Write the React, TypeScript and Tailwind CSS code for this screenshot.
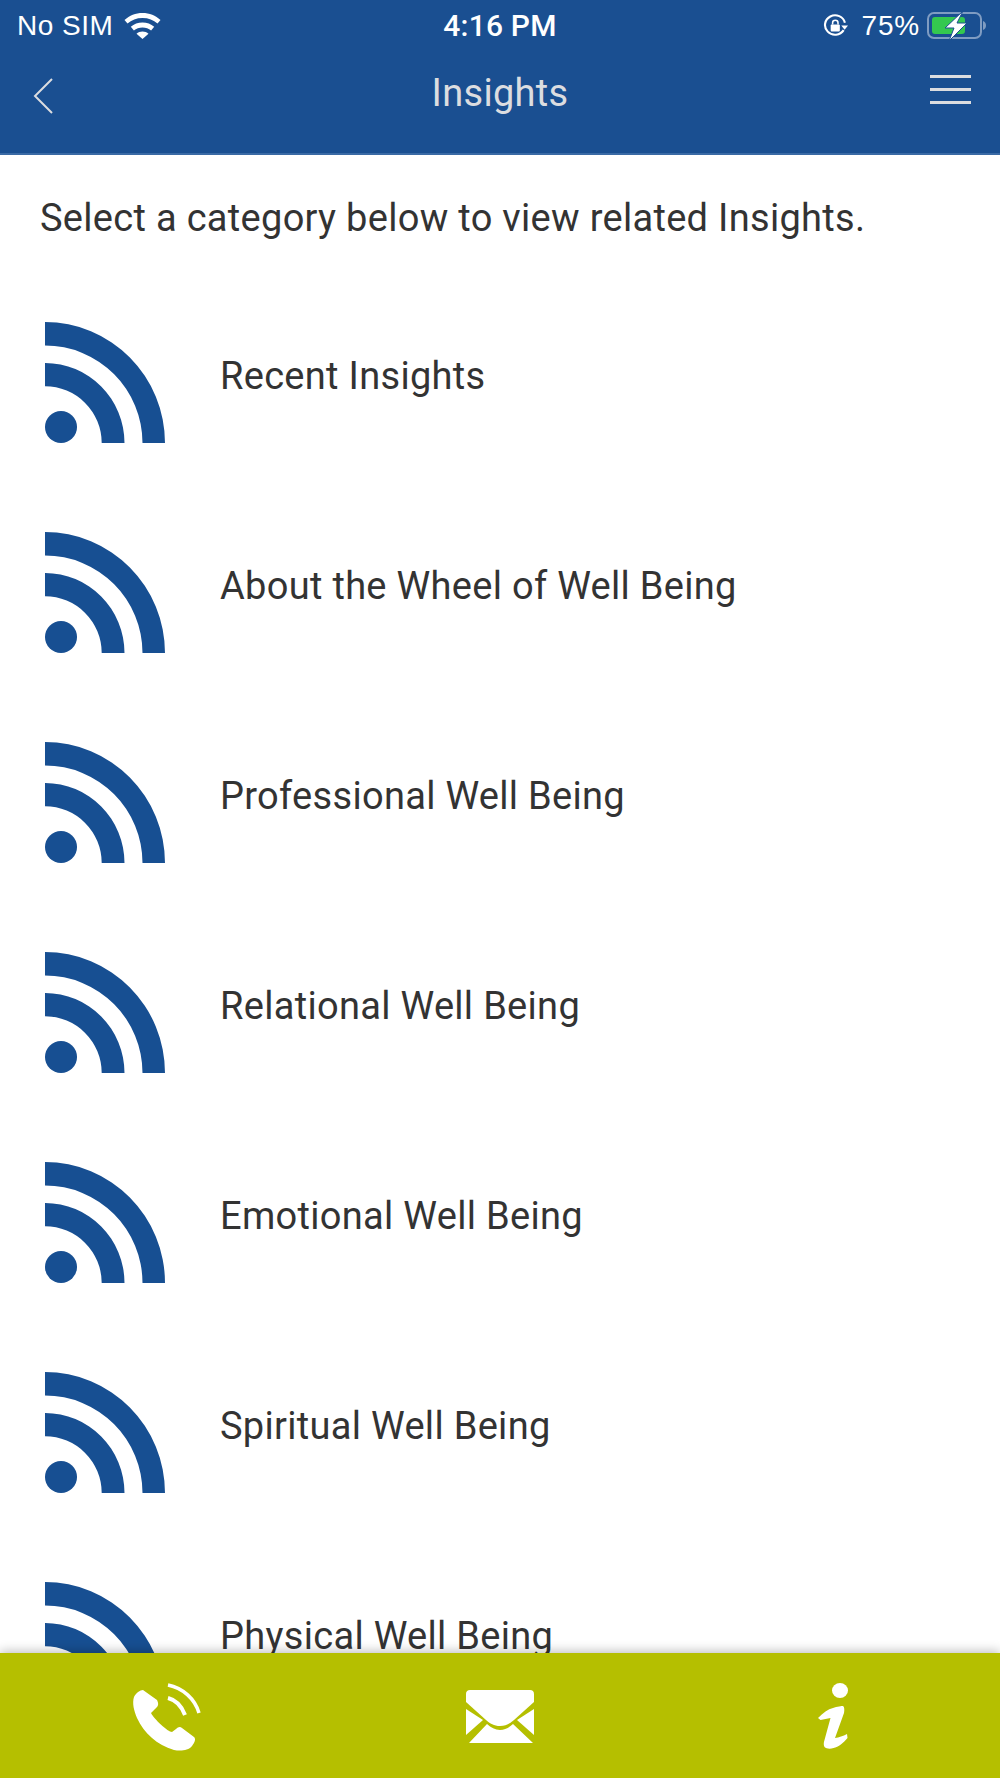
const rows = [
  "Recent Insights",
  "About the Wheel of Well Being",
  "Professional Well Being",
  "Relational Well Being",
  "Emotional Well Being",
  "Spiritual Well Being",
  "Physical Well Being",
];

function FeedIcon() {
  return (
    <svg viewBox="0 0 120 121" className="h-[121px] w-[120px] shrink-0" fill="#174f92">
      <path d="M0 0A120 121 0 0 1 120 121H97.5A97.5 97.5 0 0 0 0 23.5Z" />
      <path d="M0 41A79.5 80 0 0 1 79.5 121H56.7A56.7 56.7 0 0 0 0 64.3Z" />
      <circle cx="16" cy="105" r="16" />
    </svg>
  );
}

function WifiIcon() {
  return (
    <svg viewBox="0 0 36 26" className="h-[26px] w-[37px]" fill="#fff">
      <path d="M18 0C11 0 5 2.6 0 7l3 3.6C7 7 12 5 18 5s11 2 15 5.6L36 7C31 2.6 25 0 18 0Z" />
      <path d="M18 9.500C13.500 9.500 9.500 11 6.300 13.800l3.100 3.600C11.700 15.500 14.700 14.400 18 14.400s6.300 1.100 8.600 3l3.100-3.600C26.500 11 22.500 9.500 18 9.500Z" />
      <path d="M18 18.500c-2.300 0-4.400.8-6 2.200L18 26l6-5.300c-1.600-1.400-3.700-2.200-6-2.200Z" />
    </svg>
  );
}

function RotationLock() {
  return (
    <svg viewBox="0 0 26 26" preserveAspectRatio="none" className="h-[24px] w-[25px]" fill="none">
      <path d="M21.500 17.500A10.500 10.500 0 1 1 22.800 9.500" stroke="#fff" strokeWidth="2.200" />
      <path d="M19 12.500h7l-3.500 4.500Z" fill="#fff" />
      <rect x="8" y="11.500" width="9.500" height="7.500" rx="1" fill="#fff" />
      <path d="M10 11.500V9.500a2.800 2.800 0 0 1 5.600 0v2" stroke="#fff" strokeWidth="1.600" />
    </svg>
  );
}

function Battery() {
  return (
    <svg viewBox="0 0 60 30" className="h-[30px] w-[60px]" fill="none">
      <rect x="1" y="2" width="53" height="25" rx="6" stroke="#7f9cc2" strokeWidth="2" />
      <path d="M56 10c2 .8 3 2.500 3 4.500s-1 3.700-3 4.500Z" fill="#7f9cc2" />
      <rect x="5" y="6" width="33" height="17" rx="3" fill="#34c84f" />
      <path d="M36 0 18 17h9l-5 13 18-18h-10L36 0Z" fill="#fff" stroke="#1a4f91" strokeWidth="1" />
    </svg>
  );
}

function PhoneIcon() {
  return (
    <svg viewBox="0 0 70 68" className="h-[68px] w-[70px]" fill="#fff">
      <path d="M11 7C8 7 4 10 2 14 0 20 2 28 5 35c7 15 20 27 37 32 6 1 14 1 18-4 3-4 4-7 2-9L50 45c-2-2-4-1-6 1l-4 3c-4 0-18-13-21-19l6-6c2-2 1-5 0-7Z" />
      <path d="M36 2c15 3 27 14 31 28" stroke="#fff" strokeWidth="3.500" fill="none" />
      <path d="M36 15c8 2 14 9 17 17" stroke="#fff" strokeWidth="4" fill="none" />
    </svg>
  );
}

function MailIcon() {
  return (
    <svg viewBox="0 0 68 54" className="h-[54px] w-[68px]" fill="#fff">
      <path d="M4 0h60c2.500 0 4 1.500 4 4v8L48 30c-4 3.500-8 6-14 6s-10-2.500-14-6L0 12V4c0-2.500 1.500-4 4-4Z" />
      <path d="M0 19l17 11L0 45Z" />
      <path d="M68 19 51 30l17 15Z" />
      <path d="M21 34c4 3.500 8 6 13 6s9-2.500 13-6l20 19H3Z" />
    </svg>
  );
}

function InfoIcon() {
  return (
    <svg viewBox="0 0 31 67" className="h-[67px] w-[31px]" fill="#fff">
      <ellipse cx="22" cy="7.500" rx="8" ry="7.500" />
      <path d="M0 35c5-5 10-9 15-10 4-1.500 9-2 10-2 1.500 1 1.500 4 1 7l-9 25c4-.5 8-2 12-4l.5 4c-4 5-9 9-14 10-3 1-7 1-9-1-1-2-1-4 0-7l6-22-10 2Z" />
    </svg>
  );
}

export default function App() {
  return (
    <div
      className="flex h-[1778px] w-[1000px] flex-col overflow-hidden bg-white"
      style={{ fontFamily: "Roboto, sans-serif" }}
    >
      <header className="h-[155px] shrink-0 border-b-2 border-[#3a6aa5] bg-[#1a4f91]">
        <div
          className="flex h-[51px] items-center justify-between pl-[17px] pr-[13px] text-[28px] text-white"
          style={{ fontFamily: '"Liberation Sans", Arial, sans-serif' }}
        >
          <div className="flex flex-1 items-center gap-[11px]">
            <span className="tracking-[0.5px]">No SIM</span>
            <WifiIcon />
          </div>
          <span className="mr-[4px] text-[30px] font-medium tracking-[0.2px]" style={{ fontFamily: "Roboto, sans-serif" }}>
            4:16 PM
          </span>
          <div className="flex flex-1 items-center justify-end gap-[14px]">
            <RotationLock />
            <span className="mr-[-7px] tracking-[0.8px]">75%</span>
            <Battery />
          </div>
        </div>
        <div className="flex h-[84px] items-center justify-between pl-[33px] pr-[29px] text-[#dcdde0]">
          <div className="flex-1 pt-[6px]">
            <svg viewBox="0 0 20 36" className="h-[36px] w-[20px]" fill="none" stroke="#dcdde0" strokeWidth="2">
              <path d="M19 1 2 18l17 17" />
            </svg>
          </div>
          <span className="mr-[4px] text-[38px] tracking-[0.3px]">Insights</span>
          <div className="flex flex-1 justify-end pb-[8px]">
            <div className="flex w-[41px] flex-col gap-[10px]">
              <div className="h-[3px] bg-[#dcdde0]" />
              <div className="h-[3px] bg-[#dcdde0]" />
              <div className="h-[3px] bg-[#dcdde0]" />
            </div>
          </div>
        </div>
      </header>

      <main className="flex-1 overflow-hidden">
        <p className="pl-[40px] pt-[40px] text-[38px] leading-[46px] tracking-[0.3px] text-[#333]">
          Select a category below to view related Insights.
        </p>
        <ul className="mt-[81px]">
          {rows.map((label) => (
            <li key={label} className="flex h-[210px] items-start">
              <div className="ml-[45px]">
                <FeedIcon />
              </div>
              <span className="ml-[55px] mt-[31px] text-[38px] leading-[46px] tracking-[0.3px] text-[#333]">
                {label}
              </span>
            </li>
          ))}
        </ul>
      </main>

      <footer className="relative z-10 grid h-[125px] shrink-0 grid-cols-3 bg-[#b5bf00] shadow-[0_-2px_10px_rgba(0,0,0,0.25)]">
        <div className="flex items-center justify-center pt-[3px]">
          <PhoneIcon />
        </div>
        <div className="flex items-center justify-center pt-[2px]">
          <MailIcon />
        </div>
        <div className="flex items-center justify-center pt-[2px]">
          <InfoIcon />
        </div>
      </footer>
    </div>
  );
}
